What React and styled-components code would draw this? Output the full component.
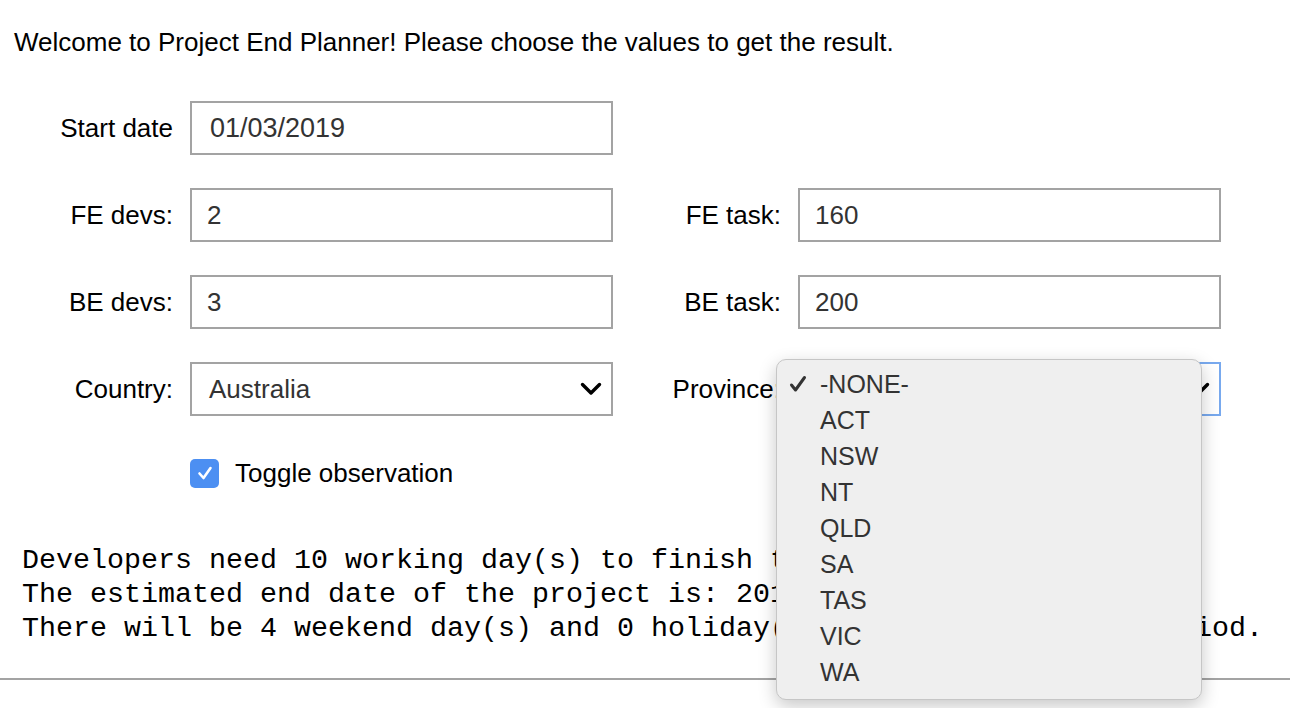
import React from "react";
import styled, { createGlobalStyle } from "styled-components";

const GlobalStyle = createGlobalStyle`
  html, body {
    margin: 0;
    padding: 0;
    background: #ffffff;
  }
  body {
    min-height: 708px;
    font-family: "Liberation Sans", Arial, sans-serif;
    color: #000;
  }
`;

const Main = styled.main`
  padding: 0 14px;
`;

const Intro = styled.p`
  margin: 0;
  padding-top: 27px;
  font-size: 26px;
  line-height: 30px;
`;

const Form = styled.div`
  display: grid;
  grid-template-columns: 159px 423px 151px 423px;
  grid-auto-rows: 54px;
  column-gap: 17px;
  row-gap: 33px;
  margin-top: 44px;
`;

const Label = styled.label`
  display: flex;
  align-items: center;
  justify-content: flex-end;
  font-size: 26px;
  white-space: nowrap;
  grid-column: ${(p) => p.$col};
`;

const TextInput = styled.input`
  box-sizing: border-box;
  width: 100%;
  height: 54px;
  margin: 0;
  border: 2px solid #a3a3a3;
  border-radius: 0;
  padding: 0 0 0 ${(p) => (p.$date ? 18 : 15)}px;
  font-family: "Liberation Sans", Arial, sans-serif;
  font-size: ${(p) => (p.$date ? 27 : 26)}px;
  color: #333;
  background: #fff;
  outline: none;
  grid-column: ${(p) => p.$col};
`;

const SelectBox = styled.div`
  position: relative;
  box-sizing: border-box;
  height: 54px;
  display: flex;
  align-items: center;
  padding: 0 9px 0 17px;
  border: 2px solid ${(p) => (p.$focused ? "#78a9ee" : "#a3a3a3")};
  background: #fff;
  font-size: 26px;
  color: #333;
  grid-column: ${(p) => p.$col};
`;

const ChevronSlot = styled.span`
  margin-left: auto;
  display: flex;
`;

const Chevron = () => (
  <ChevronSlot>
    <svg width="22" height="14" viewBox="0 0 22 14">
      <polyline
        points="2.5,2.5 11,11 19.5,2.5"
        fill="none"
        stroke="#000"
        strokeWidth="3.4"
        strokeLinecap="round"
        strokeLinejoin="round"
      />
    </svg>
  </ChevronSlot>
);

const Popup = styled.ul`
  position: absolute;
  left: -24px;
  top: -5px;
  width: 426px;
  height: 341px;
  box-sizing: border-box;
  margin: 0;
  padding: 6px 0 0;
  list-style: none;
  background: #efefef;
  border: 1px solid #c6c6c6;
  border-radius: 10px;
  box-shadow: 0 6px 18px rgba(0, 0, 0, 0.22);
  z-index: 10;
`;

const Option = styled.li`
  display: flex;
  align-items: center;
  height: 36px;
  padding-left: 12px;
  font-size: 25px;
  color: #333;
`;

const CheckSlot = styled.span`
  display: inline-flex;
  width: 31px;
  justify-content: flex-start;
`;

const OptionCheck = () => (
  <svg width="18" height="18" viewBox="0 0 18 18">
    <polyline
      points="2.5,10 6.5,15 15.5,2.5"
      fill="none"
      stroke="#333"
      strokeWidth="3"
      strokeLinecap="round"
      strokeLinejoin="round"
    />
  </svg>
);

const ToggleRow = styled.label`
  grid-column: 2 / span 2;
  display: flex;
  align-items: center;
  gap: 16px;
  font-size: 26px;
  height: 48px;
`;

const CheckBox = styled.span`
  width: 29px;
  height: 29px;
  border-radius: 5px;
  background: #4c8ff2;
  display: flex;
  align-items: center;
  justify-content: center;
`;

const Result = styled.div`
  margin: 41px 0 0 8px;
  font-family: "Liberation Mono", "Courier New", monospace;
  font-size: 28.33px;
  line-height: 34px;
  white-space: pre;
`;

const Rule = styled.hr`
  margin: 32px 0 0;
  border: 0;
  border-top: 2px solid #a3a3a3;
  height: 0;
`;

const provinces = ["-NONE-", "ACT", "NSW", "NT", "QLD", "SA", "TAS", "VIC", "WA"];

export default function App() {
  return (
    <>
      <GlobalStyle />
      <Main>
        <Intro>
          Welcome to Project End Planner! Please choose the values to get the result.
        </Intro>
        <Form>
          <Label $col={1}>Start date</Label>
          <TextInput $col={2} $date defaultValue="01/03/2019" />

          <Label $col={1}>FE devs:</Label>
          <TextInput $col={2} defaultValue="2" />
          <Label $col={3}>FE task:</Label>
          <TextInput $col={4} defaultValue="160" />

          <Label $col={1}>BE devs:</Label>
          <TextInput $col={2} defaultValue="3" />
          <Label $col={3}>BE task:</Label>
          <TextInput $col={4} defaultValue="200" />

          <Label $col={1}>Country:</Label>
          <SelectBox $col={2}>
            <span>Australia</span>
            <Chevron />
          </SelectBox>
          <Label $col={3}>Province:</Label>
          <SelectBox $col={4} $focused>
            <Chevron />
            <Popup>
              {provinces.map((p, i) => (
                <Option key={p}>
                  <CheckSlot>{i === 0 && <OptionCheck />}</CheckSlot>
                  {p}
                </Option>
              ))}
            </Popup>
          </SelectBox>

          <ToggleRow>
            <CheckBox>
              <svg width="18" height="18" viewBox="0 0 18 18">
                <polyline
                  points="3.5,9.5 7.5,14 14.5,4"
                  fill="none"
                  stroke="#fff"
                  strokeWidth="2.6"
                  strokeLinecap="round"
                  strokeLinejoin="round"
                />
              </svg>
            </CheckBox>
            Toggle observation
          </ToggleRow>
        </Form>
        <Result>
          {"Developers need 10 working day(s) to finish the project.\n"}
          {"The estimated end date of the project is: 2019-03-14.\n"}
          {"There will be 4 weekend day(s) and 0 holiday(s) within the chosen period."}
        </Result>
      </Main>
      <Rule />
    </>
  );
}
